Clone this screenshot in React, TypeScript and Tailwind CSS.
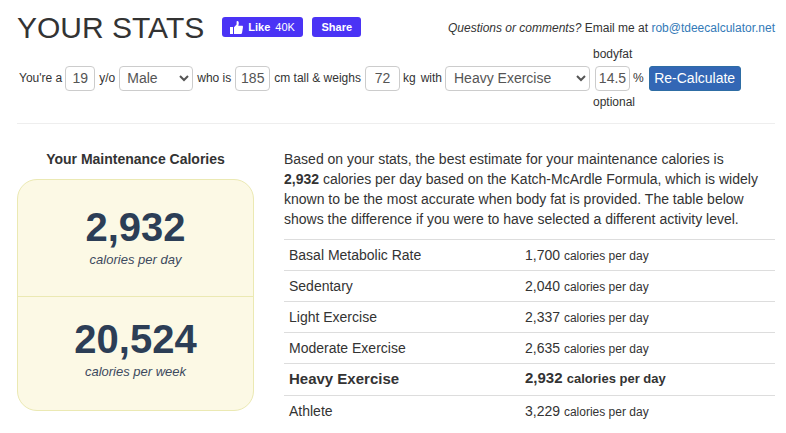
const rows = [
  { name: "Basal Metabolic Rate", cal: "1,700" },
  { name: "Sedentary", cal: "2,040" },
  { name: "Light Exercise", cal: "2,337" },
  { name: "Moderate Exercise", cal: "2,635" },
  { name: "Heavy Exercise", cal: "2,932", active: true },
  { name: "Athlete", cal: "3,229" },
];

const inputClass =
  "h-[25px] rounded border border-[#ccc] bg-white text-center text-[14px] leading-none text-[#555] outline-none";

const App = () => {
  return (
    <div className="h-[433px] w-[786px] overflow-hidden bg-white pr-[11px] pl-[17px] font-['Liberation_Sans',Arial,sans-serif] text-[14px] text-[#333]">
      {/* Header */}
      <div className="flex h-[46px] items-end">
        <h1 className="text-[30px] leading-[36px] font-normal">YOUR STATS</h1>
        <div className="mb-[9px] ml-[18px] flex items-center gap-[9px]">
          <span className="flex h-[20px] w-[81px] items-center rounded-[3px] bg-[#4a33f5] pl-[8px] text-[11px] text-white">
            <svg viewBox="0 0 13 13" className="mr-[5px] h-[13px] w-[13px] fill-white">
              <rect x="0" y="6" width="3" height="7" />
              <path d="M4 6.2 6.6 3.4V0.6C6.6.2 7 0 7.4 0 8.6.2 9 1.6 8.7 3L8.3 4.8H12C12.7 4.8 13 5.3 13 5.9L12 12C11.9 12.6 11.5 13 10.9 13H4Z" />
            </svg>
            <b>Like</b>
            <span className="ml-[5px]">40K</span>
          </span>
          <span className="flex h-[20px] w-[49px] items-center justify-center rounded-[3px] bg-[#4a33f5] pt-[1px] text-[11px] font-bold text-white">
            Share
          </span>
        </div>
        <p className="mb-[11px] ml-auto text-[12px] leading-[14px]">
          <i>Questions or comments?</i> Email me at <span className="text-[#337ab7]">rob@tdeecalculator.net</span>
        </p>
      </div>

      {/* Form */}
      <div className="flex h-[78px] items-center border-b border-[#eee] pb-[13px] pl-[2px] text-[12px] leading-[14px] whitespace-nowrap">
        <span>You're a</span>
        <input readOnly value="19" className={`${inputClass} ml-[3px] w-[30px]`} />
        <span className="ml-[4px]">y/o</span>
        <select defaultValue="Male" className={`${inputClass} ml-[4px] w-[74px] pl-[3px] text-left`}>
          <option>Male</option>
          <option>Female</option>
        </select>
        <span className="ml-[4px]">who is</span>
        <input readOnly value="185" className={`${inputClass} ml-[4px] w-[35px]`} />
        <span className="ml-[4px]">cm tall &amp; weighs</span>
        <input readOnly value="72" className={`${inputClass} ml-[4px] w-[35px]`} />
        <span className="ml-[3px]">kg</span>
        <span className="ml-[5px]">with</span>
        <select defaultValue="Heavy Exercise" className={`${inputClass} ml-[3px] w-[145px] pl-[4px] text-left`}>
          <option>Heavy Exercise</option>
          <option>Athlete</option>
        </select>
        <div className="relative ml-[5px]">
          <span className="absolute -top-[19px] -left-[2px]">bodyfat</span>
          <input readOnly value="14.5" className={`${inputClass} block w-[35px]`} />
          <span className="absolute top-[29px] -left-[2px]">optional</span>
        </div>
        <span className="ml-[3px]">%</span>
        <button className="ml-[5px] h-[25px] w-[92px] rounded-[3px] border border-[#2e6da4] bg-[#3367b5] text-[14px] text-white">
          Re-Calculate
        </button>
      </div>

      {/* Results */}
      <div className="mt-[25px] flex">
        <div className="w-[237px] shrink-0">
          <h2 className="text-center text-[14px] leading-[20px] font-bold">Your Maintenance Calories</h2>
          <div className="mt-[10px] h-[232px] rounded-[20px] border border-[#ebe9b3] bg-[#fcf9e5] text-center text-[#2c3e56]">
            <div className="h-[117px] border-b border-[#ebe9b3] pt-[24px]">
              <div className="text-[40px] leading-[46px] font-bold">2,932</div>
              <div className="mt-[2px] text-[13px] leading-[16px] text-[#3c4a5e] italic">calories per day</div>
            </div>
            <div className="pt-[19px]">
              <div className="text-[40px] leading-[46px] font-bold">20,524</div>
              <div className="mt-[2px] text-[13px] leading-[16px] text-[#3c4a5e] italic">calories per week</div>
            </div>
          </div>
        </div>

        <div className="ml-[30px] flex-1">
          <p className="leading-[20px]">
            Based on your stats, the best estimate for your maintenance calories is
            <br />
            <b>2,932</b> calories per day based on the Katch-McArdle Formula, which is widely known to be the most
            accurate when body fat is provided. The table below shows the difference if you were to have selected a
            different activity level.
          </p>
          <table className="mt-[10px] w-full border-collapse">
            <tbody>
              {rows.map((row) => (
                <tr key={row.name} className={`border-t border-[#ddd] ${row.active ? "text-[15px] font-bold" : ""}`}>
                  <td className={`w-[236px] pl-[5px] leading-[20px] ${row.active ? "h-[32px] pb-[2px]" : "h-[31px]"}`}>{row.name}</td>
                  <td className={`pl-[5px] leading-[20px] ${row.active ? "pb-[2px]" : ""}`}>
                    {row.cal} <small className={row.active ? "text-[13px]" : "text-[12px]"}>calories per day</small>
                  </td>
                </tr>
              ))}
            </tbody>
          </table>
        </div>
      </div>
    </div>
  );
};

export default App;
